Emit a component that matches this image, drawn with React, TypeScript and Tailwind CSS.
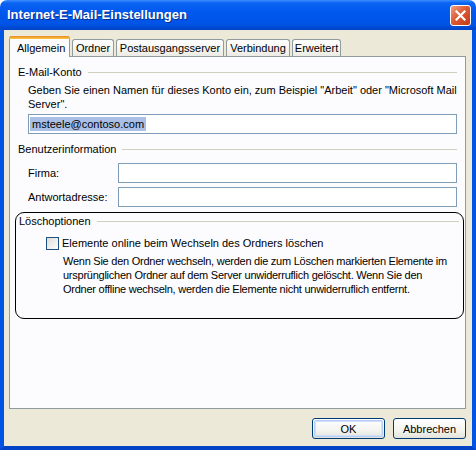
import React from 'react'

const TABS = [
  { label: 'Allgemein', w: 'w-[61px]', active: true },
  { label: 'Ordner', w: 'w-[42px]' },
  { label: 'Postausgangsserver', w: 'w-[108px]' },
  { label: 'Verbindung', w: 'w-[64px]' },
  { label: 'Erweitert', w: 'w-[49px]' },
]

function GroupHeader({ title }: { title: string }) {
  return (
    <div className="flex items-center h-[14px]">
      <span className="pr-[6px]">{title}</span>
      <div className="flex-1 h-px bg-[#D0D0BF]" />
    </div>
  )
}

function TextBox({ children, className = '' }: { children?: React.ReactNode; className?: string }) {
  return (
    <div className={`h-[20px] border border-[#7F9DB9] bg-white flex items-center pl-[1px] ${className}`}>
      {children}
    </div>
  )
}

function XpButton({ label, isDefault }: { label: string; isDefault?: boolean }) {
  return (
    <div className="w-[73px] h-[21px] rounded-[3px] border border-[#003C74] bg-[linear-gradient(to_bottom,#FFFFFF_0%,#F4F4F0_60%,#E3E2DA_100%)] p-px">
      <div
        className={`w-full h-full rounded-[2px] flex items-center justify-center ${
          isDefault ? 'border border-[#B8CCF8] shadow-[inset_0_0_0_1px_#D3E0FC]' : ''
        }`}
      >
        {label}
      </div>
    </div>
  )
}

export default function App() {
  return (
    <div className="w-[476px] h-[450px] flex flex-col font-['Liberation_Sans',sans-serif] text-[11px] leading-[14px] text-black bg-white">
      {/* Title bar */}
      <div className="h-[30px] shrink-0 rounded-t-[7px] bg-[linear-gradient(to_bottom,#3B8EFF_0%,#0B63F3_10%,#0058EE_40%,#0054E6_80%,#0043C6_100%)] flex items-center justify-between pl-[7px] pr-[5px]">
        <span className="font-bold text-[13px] text-white [text-shadow:1px_1px_0_#0A2E8C]">
          Internet-E-Mail-Einstellungen
        </span>
        <div className="w-[21px] h-[21px] rounded-[3px] border border-white bg-[linear-gradient(135deg,#F0A182_0%,#DE5A36_45%,#C43A17_100%)] flex items-center justify-center">
          <svg width="11" height="11" viewBox="0 0 11 11">
            <path d="M1.5 1.5 L9.5 9.5 M9.5 1.5 L1.5 9.5" stroke="white" strokeWidth="2.2" strokeLinecap="square" />
          </svg>
        </div>
      </div>

      {/* Window body */}
      <div className="flex-1 flex flex-col bg-[#ECE9D8] border-x-[4px] border-b-[4px] border-x-[#0054E3] border-b-[#0043C6] pl-[5px] pr-[6px]">
        {/* Tabs */}
        <div className="flex items-end h-[26px] pt-[6px] gap-[2px] relative z-10">
          {TABS.map((t) =>
            t.active ? (
              <div
                key={t.label}
                className={`${t.w} h-[21px] -mb-px bg-[#FCFCFE] border border-b-0 border-[#919B9C] rounded-t-[3px] flex flex-col`}
              >
                <div className="h-[3px] -mx-px -mt-px rounded-t-[3px] bg-[linear-gradient(to_bottom,#E68B2C,#FFC83C)]" />
                <div className="flex-1 flex items-center pl-[7px]">{t.label}</div>
              </div>
            ) : (
              <div
                key={t.label}
                className={`${t.w} h-[17px] border border-b-0 border-[#919B9C] rounded-t-[3px] bg-[linear-gradient(to_bottom,#FFFFFF,#ECEBE5)] flex items-center justify-center`}
              >
                {t.label}
              </div>
            )
          )}
        </div>

        {/* Tab panel */}
        <div className="h-[353px] border border-[#919B9C] bg-[#FCFCFE] pl-[8px] pr-[8px]">
          <div className="mt-[8px]">
            <GroupHeader title="E-Mail-Konto" />
            <div className="pl-[10px] mt-[4px]">
              <p>
                Geben Sie einen Namen für dieses Konto ein, zum Beispiel "Arbeit" oder "Microsoft Mail Server".
              </p>
              <TextBox className="mt-[3px]">
                <span className="bg-[#A9BFE6] px-[2px]">msteele@contoso.com</span>
              </TextBox>
            </div>
          </div>

          <div className="mt-[8px]">
            <GroupHeader title="Benutzerinformation" />
            <div className="pl-[10px] mt-[7px] flex flex-col gap-[4px]">
              <div className="flex items-center">
                <span className="w-[90px]">Firma:</span>
                <TextBox className="flex-1" />
              </div>
              <div className="flex items-center">
                <span className="w-[90px]">Antwortadresse:</span>
                <TextBox className="flex-1" />
              </div>
            </div>
          </div>

          {/* Highlighted group */}
          <div className="mt-[5px] -ml-[3px] -mr-[7px] h-[107px] border border-black rounded-[9px] pt-px pl-[3px] pr-[4px]">
            <GroupHeader title="Löschoptionen" />
            <div className="mt-[8px] pl-[27px] flex items-center gap-[3px]">
              <div className="w-[13px] h-[13px] border border-[#1C5180] bg-[linear-gradient(135deg,#DCDCD7_0%,#FFFFFF_100%)]" />
              <span>Elemente online beim Wechseln des Ordners löschen</span>
            </div>
            <p className="mt-[4px] pl-[44px] whitespace-nowrap tracking-[-0.25px]">
              Wenn Sie den Ordner wechseln, werden die zum Löschen markierten Elemente im
              <br />
              ursprünglichen Ordner auf dem Server unwiderruflich gelöscht. Wenn Sie den
              <br />
              Ordner offline wechseln, werden die Elemente nicht unwiderruflich entfernt.
            </p>
          </div>
        </div>

        {/* Buttons */}
        <div className="flex justify-end gap-[8px] mt-[9px]">
          <XpButton label="OK" isDefault />
          <XpButton label="Abbrechen" />
        </div>
      </div>
    </div>
  )
}
